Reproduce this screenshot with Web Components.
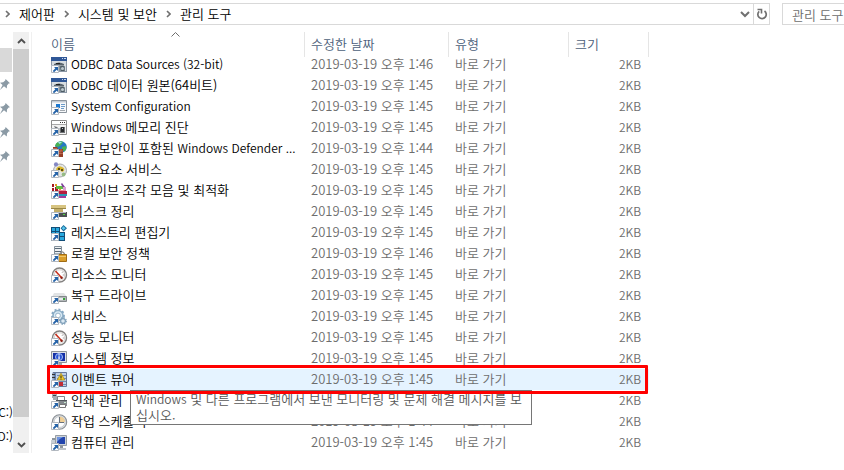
<!DOCTYPE html>
<html lang="ko">
<head>
<meta charset="utf-8">
<title>관리 도구</title>
<style>
    body {
        margin: 0;
        background: #fff;
        color: #000;
        font: 350 13px/21px "Noto Sans CJK KR", "Noto Sans", sans-serif;
        overflow: hidden;
    }
</style>
</head>
<body>
<explorer-window>
    <address-bar slot="address"></address-bar>
    <search-box slot="address" placeholder="관리 도구"></search-box>
    <nav-pane slot="nav"></nav-pane>
    <scroll-bar slot="nav"></scroll-bar>
    <file-list></file-list>
</explorer-window>

<script>
/**
 * Custom Element: Explorer Window
 */
class ExplorerWindow extends HTMLElement {
    connectedCallback() {
        this.attachShadow({ mode: 'open' }).innerHTML = `
            <style>
                :host { display: block; }
                header {
                    display: flex;
                    gap: 12px;
                    padding: 3px 0 7px;
                }
                main { display: flex; }
                .content {
                    flex: 1;
                    min-width: 0;
                    margin-left: 2px;
                    padding-left: 16px;
                    border-left: 1px solid #f0f0f0;
                }
            </style>
            <header><slot name="address"></slot></header>
            <main>
                <slot name="nav"></slot>
                <div class="content"><slot></slot></div>
            </main>
        `;
    }
}

/**
 * Custom Element: Address Bar
 */
class AddressBar extends HTMLElement {
    connectedCallback() {
        const chevron = `<svg width="5" height="8" viewBox="0 0 5 8"><path d="M1 1l3 3-3 3" fill="none" stroke="#707070" stroke-width="1.6"/></svg>`;
        const crumbs = ['제어판', '시스템 및 보안', '관리 도구'];

        this.attachShadow({ mode: 'open' }).innerHTML = `
            <style>
                :host {
                    flex: 1;
                    display: flex;
                    justify-content: space-between;
                    height: 20px;
                    border: 1px solid #d9d9d9;
                    border-left: 0;
                }
                nav, .tools { display: flex; }
                nav { padding-left: 5px; }
                .crumb {
                    display: flex;
                    align-items: center;
                    gap: 9px;
                    margin-right: 9px;
                }
                a {
                    color: #000;
                    line-height: 20px;
                    text-decoration: none;
                }
                button {
                    display: flex;
                    align-items: center;
                    justify-content: center;
                    width: 16px;
                    padding: 0;
                    border: 0;
                    background: none;
                }
                .refresh { border-left: 1px solid #d9d9d9; }
            </style>
            <nav aria-label="경로">
                ${crumbs.map(name => `<span class="crumb">${chevron}<a href="#">${name}</a></span>`).join('')}
            </nav>
            <div class="tools">
                <button aria-label="이전 위치">
                    <svg width="10" height="8" viewBox="0 0 10 8"><path d="M1 2l4 4 4-4" fill="none" stroke="#707070" stroke-width="2"/></svg>
                </button>
                <button class="refresh" aria-label="새로 고침">
                    <svg width="12" height="12" viewBox="0 0 12 12">
                        <path d="M8.5 3a4.2 4.2 0 1 1-5.3.3" fill="none" stroke="#707070" stroke-width="1.7"/>
                        <path d="M1.5 1.5h4v4" fill="none" stroke="#707070" stroke-width="1.6"/>
                    </svg>
                </button>
            </div>
        `;
    }
}

/**
 * Custom Element: Search Box
 */
class SearchBox extends HTMLElement {
    connectedCallback() {
        const placeholder = this.getAttribute('placeholder') ?? '';
        this.attachShadow({ mode: 'open' }).innerHTML = `
            <style>
                :host { display: flex; flex: 0 0 62px; }
                input {
                    width: 100%;
                    height: 22px;
                    box-sizing: border-box;
                    padding: 0 0 0 9px;
                    border: 1px solid #d9d9d9;
                    border-right: 0;
                    font: inherit;
                    line-height: 20px;
                    outline: none;
                }
                input::placeholder { color: #6d6d6d; }
            </style>
            <input type="text" aria-label="검색" placeholder="${placeholder}">
        `;
    }
}

/**
 * Custom Element: Navigation Pane (scrolled so that only its right edge shows)
 */
class NavPane extends HTMLElement {
    connectedCallback() {
        const pin = `
            <svg width="10" height="11" viewBox="0 0 10 11">
                <path d="M5.6 0L10 4.2 8.6 4.6 7 6.4 6.8 9.4 4 7.2 0 11 2.6 6 0 3.8 3.2 3.2 5.2 1.6z" fill="#8b9aa5"/>
            </svg>`;

        this.attachShadow({ mode: 'open' }).innerHTML = `
            <style>
                :host {
                    display: flex;
                    flex-direction: column;
                    flex: 0 0 13px;
                    overflow: hidden;
                    padding: 16px 0 6px;
                    box-sizing: border-box;
                }
                .item {
                    display: flex;
                    align-items: center;
                    justify-content: flex-end;
                    height: 24px;
                    padding-right: 3px;
                    white-space: nowrap;
                }
                .selected { margin-right: 1px; background: #d9d9d9; }
                .drive { padding-right: 0; font-size: 12px; }
                .drives { margin-top: auto; }
            </style>
            <div class="item selected"></div>
            ${`<div class="item">${pin}</div>`.repeat(4)}
            <div class="drives">
                <div class="item drive">C:)</div>
                <div class="item drive">D:)</div>
            </div>
        `;
    }
}

/**
 * Custom Element: Scroll Bar
 */
class ScrollBar extends HTMLElement {
    connectedCallback() {
        this.attachShadow({ mode: 'open' }).innerHTML = `
            <style>
                :host {
                    display: flex;
                    flex-direction: column;
                    flex: 0 0 16px;
                    background: #f0f0f0;
                }
                button {
                    display: flex;
                    align-items: center;
                    justify-content: center;
                    height: 17px;
                    padding: 0;
                    border: 0;
                    background: none;
                }
                .track { flex: 1; }
                .thumb { height: 95%; background: #cdcdcd; }
            </style>
            <button aria-label="위로">
                <svg width="9" height="8" viewBox="0 0 9 8"><path d="M1 6l3.5-3.5L8 6" fill="none" stroke="#505050" stroke-width="1.9"/></svg>
            </button>
            <div class="track"><div class="thumb"></div></div>
            <button aria-label="아래로">
                <svg width="9" height="8" viewBox="0 0 9 8"><path d="M1 2l3.5 3.5L8 2" fill="none" stroke="#505050" stroke-width="1.9"/></svg>
            </button>
        `;
    }
}

/**
 * Custom Element: Tool Icon, 16px picture with the shortcut badge in its corner
 */
const GAUGE = `
    <circle cx="8.5" cy="8" r="7" fill="#f4f4f4" stroke="#83817f" stroke-width="1.4"/>
    <circle cx="8.5" cy="8" r="5.2" fill="#fff" stroke="#c9c4c0" stroke-width=".7"/>
    <path d="M4.5 4l6.3 7" stroke="#c9301c" stroke-width="1.6"/>
    <path d="M12 4.6l-1 1.2M13.2 8h-1.4" stroke="#888" stroke-width=".8"/>
    <circle cx="10.6" cy="10.7" r="1.2" fill="#8a1d12"/>`;

const ODBC = `
    <path d="M0 0h16v15H0z" fill="#8c98a6"/>
    <path d="M0 0h16v4H0z" fill="#2f5797"/>
    <path d="M11 1h1v1h-1zM13 1h2v1h-2z" fill="#c9d8ee"/>
    <path d="M1 4h14v10H1z" fill="#d7dde1"/>
    <path d="M3 7q5-3 10 0v1.5H3z" fill="#59646d"/>
    <path d="M5 6h4v1H5z" fill="#222"/>
    <path d="M8 9h6v5H8z" fill="#89979f"/>
    <path d="M9 9.5q3-1.5 4.5.5v4H10z" fill="#4e5d66"/>
    <circle cx="11.5" cy="11.6" r="1.5" fill="#bfcbd1"/>`;

const ICONS = {
    odbc: ODBC,
    config: `
        <path d="M.5 1.5h15v12H.5z" fill="#f7f9fb" stroke="#8c959e"/>
        <path d="M1 2h14v1.5H1z" fill="#c4ccd4"/>
        <path d="M5 5h4v4H5z" fill="#1c78d0"/>
        <path d="M10 5h4v1h-4zM10 7h4v1h-4zM10 9h3v1h-3z" fill="#6c9bc9"/>
        <path d="M9 11h5v1H9z" fill="#a2a8ae"/>`,
    memory: `
        <path d="M.5.5h15v14H.5z" fill="#f2f2f2" stroke="#8c8c8c"/>
        <path d="M1 1h14v3H1z" fill="#fff"/>
        <path d="M9 2h1v1H9zM11 2h1v1h-1zM13 2h1v1h-1z" fill="#333"/>
        <path d="M1 4h14v1H1z" fill="#a8a8a8"/>
        <path d="M3 6l3 1 2 2 2-2h4v6H8V9L4 8z" fill="#6e7174"/>
        <path d="M10 7h3v5h-3z" fill="#292c2f"/>
        <path d="M8 8h1v5H8zM11 8h1v1h-1z" fill="#c0c4c8"/>`,
    firewall: `
        <circle cx="10" cy="6" r="5.8" fill="#2679c2"/>
        <path d="M7 1q3-1.5 5 0l-2 3-3 2-3-1q.5-3 3-4zM11 6l4-1q1 3-1.5 5.5L11 9z" fill="#48b252"/>
        <path d="M7 1.2q2-1 4 0L8.5 3z" fill="#a4def4"/>
        <path d="M2 6h4l1 2h5v8H7V9H2z" fill="#943d26"/>
        <path d="M2 7.5h4M8 10h4M8 12.5h4M10 8v2M9 10v2.5" stroke="#cf8266" stroke-width=".6"/>`,
    component: `
        <circle cx="9" cy="8.5" r="6.5" fill="#e4e5e3" stroke="#a7aaad"/>
        <circle cx="5" cy="2.4" r="2.1" fill="#8387c4"/>
        <path d="M5 7q2-4 6-2 3 1 2 4l-2 1-2-2-3 1z" fill="#d9b62c"/>
        <path d="M7 6h2v2H7zM10 7h2v2h-2z" fill="#5b4b12"/>
        <circle cx="12.6" cy="12.5" r="1.9" fill="#95bb84"/>`,
    defrag: `
        <path d="M1 1h2v3H1zM4 4h3v4H4zM1 5h2v3H1z" fill="#a51922"/>
        <path d="M4 1h2v2H4zM8 4h2v3H8z" fill="#e49a25"/>
        <path d="M5 3h7v3H5z" fill="#62bd43"/>
        <path d="M11 0l3 4-2 1-2-4z" fill="#7d3e99"/>
        <path d="M12 4h3v4h-3z" fill="#d9a0d4"/>
        <path d="M7 8h9v3H7z" fill="#b51d3f"/>
        <path d="M8 11h8v2H8z" fill="#2896b5"/>
        <path d="M7 13h8v2H7z" fill="#a13b9c"/>
        <path d="M7 7h8v1H7z" fill="#ef8b9b"/>`,
    cleanup: `
        <path d="M0 1h15v3H0z" fill="#d7c481"/>
        <path d="M0 4h15v1H0z" fill="#9a8746"/>
        <path d="M3 5h9v3H3z" fill="#c2ae69"/>
        <path d="M5 8h11v5H5z" fill="#4c5052"/>
        <path d="M6 8h9v1H6z" fill="#b8bbbd"/>
        <path d="M12 10h2v1h-2z" fill="#53d642"/>`,
    registry: `
        <path d="M0 2h9v5h5v9H0z" fill="#124e78"/>
        <path d="M1 3h3v3H1zM5 3h3v3H5zM5 7h3v3H5zM9 8h4v3H9zM9 12h4v3H9zM1 7h3v3H1z" fill="#29a9df"/>
        <path d="M12.5 0L16 3.2 12.5 6.5 9.5 3.2z" fill="#186b9b"/>
        <path d="M12.5 1.3l2 2-2 1.8-1.7-1.9z" fill="#5bc8ee"/>`,
    policy: `
        <path d="M3.5.5h7v13h-7z" fill="#eef1f3" stroke="#83909b"/>
        <path d="M4 2h6v1H4zM4 5h6v1H4z" fill="#596875"/>
        <path d="M4 7h6v1H4z" fill="#a2b0ba"/>
        <path d="M9.2 9V7.3q2-3 4 0V9" fill="none" stroke="#868686" stroke-width="1.3"/>
        <path d="M7.5 8.5h8v7h-8z" fill="#d99d2b" stroke="#a06c15"/>
        <path d="M8 10h7v1H8z" fill="#f0c76b"/>`,
    gauge: GAUGE,
    recovery: `
        <path d="M3 5h10l3 4H1z" fill="#e2e4e5"/>
        <path d="M1.5 8.5h14v5h-14z" fill="#b4b8ba" stroke="#83888b"/>
        <path d="M8 10h6v2H8z" fill="#e8ebec"/>
        <path d="M12 10h2v2h-2z" fill="#39a23a"/>`,
    services: `
        <circle cx="7" cy="6.5" r="5" fill="#d9e9f4" stroke="#8eafc7" stroke-width="1.6"/>
        <circle cx="7" cy="6.5" r="6" fill="none" stroke="#86a8c3" stroke-width="1.8" stroke-dasharray="2 2"/>
        <circle cx="7" cy="6.5" r="2.4" fill="#fff" stroke="#96b4ca"/>
        <circle cx="12" cy="12" r="2.4" fill="#dceaf4" stroke="#7e9fb9" stroke-width="1.2"/>
        <circle cx="12" cy="12" r="3.3" fill="none" stroke="#7e9fb9" stroke-width="1.2" stroke-dasharray="1.4 1.2"/>`,
    info: `
        <path d="M.5.5h15v11H.5z" fill="#dfe2e6" stroke="#8f949a"/>
        <path d="M2 2h12v8H2z" fill="#1530a6"/>
        <circle cx="8" cy="6" r="3.5" fill="#2a55d4" stroke="#a8c1f5"/>
        <path d="M7.4 3.2h1.3v1.2H7.4zM7.4 5.2h1.3v3.2H7.4z" fill="#fff"/>
        <path d="M6 12h5v2H6z" fill="#a0a5aa"/>
        <path d="M4 14h9v1H4z" fill="#777c82"/>`,
    event: `
        <path d="M2 .5h13.5v14H2z" fill="#bed0e7" stroke="#66799a"/>
        <path d="M3 1h2v13H3z" fill="#6381ad"/>
        <path d="M1 2h3v1H1zM1 5h3v1H1z" fill="#333"/>
        <path d="M6 3h9v1H6zM6 6h9v1H6zM6 9h9v1H6zM6 12h9v1H6z" fill="#6e8ab3"/>
        <path d="M10 1.2L13.8 8H6.2z" fill="#f5cd25" stroke="#a78b16" stroke-width=".7"/>
        <path d="M9.5 3.5h1v2.4h-1zM9.5 6.5h1v1h-1z" fill="#222"/>
        <path d="M8 10h4v4H8z" fill="#c12c35"/>`,
    print: `
        <path d="M1 1h5v2h5v4H2V5H1z" fill="#a7adb2"/>
        <path d="M2 2h3v1H2zM6 4h4v1H6z" fill="#42484d"/>
        <path d="M6.5 3.5h7v4h-7z" fill="#fff" stroke="#818589"/>
        <path d="M5 7h11v6H5z" fill="#84898d"/>
        <path d="M5 7h11v1H5z" fill="#50565b"/>
        <path d="M8.5 11.5h6v3h-6z" fill="#fff" stroke="#777"/>
        <path d="M13 9h2v1h-2z" fill="#c9ecd0"/>`,
    scheduler: `
        <circle cx="8.5" cy="8" r="7.2" fill="#d9dde1" stroke="#898e93" stroke-width="1.1"/>
        <circle cx="8.5" cy="8" r="5.4" fill="#fff" stroke="#bfc4c8" stroke-width=".8"/>
        <path d="M8.5 2.5a5.5 5.5 0 0 1 5.5 5.5H8.5z" fill="#f0cf95"/>
        <path d="M8.5 3v5.5H13" fill="none" stroke="#67717b" stroke-width="1.1"/>`,
    computer: `
        <path d="M0 5h4v6H0z" fill="#c9cfd4"/>
        <path d="M1 3h3v2H1z" fill="#8b959e"/>
        <path d="M4.5.5h11v10h-11z" fill="#ccd2d8" stroke="#959ca4"/>
        <path d="M6 2h8v7H6z" fill="#2345ad"/>
        <path d="M6 2h6q-4 2-6 5z" fill="#6c93df"/>
        <path d="M9 11h3v2H9z" fill="#8e969d"/>
        <path d="M8 13h7v2H8z" fill="#bfc5ca"/>`
};

class ToolIcon extends HTMLElement {
    connectedCallback() {
        this.attachShadow({ mode: 'open' }).innerHTML = `
            <style>
                :host { display: block; flex: 0 0 16px; height: 16px; }
                svg { display: block; overflow: visible; }
            </style>
            <svg width="16" height="16" viewBox="0 0 16 16" aria-hidden="true">
                ${ICONS[this.getAttribute('name')]}
                <path d="M.5 8.5h7v7h-7z" fill="#fff" stroke="#b3b9c0"/>
                <path d="M3 10h4v4L5.7 12.7 3 15.2 1.8 14 4.3 11.3z" fill="#2563a8"/>
            </svg>
        `;
    }
}

/**
 * Custom Element: Tool Tip
 */
class ToolTip extends HTMLElement {
    connectedCallback() {
        this.attachShadow({ mode: 'open' }).innerHTML = `
            <style>
                :host {
                    display: block;
                    width: 393px;
                    padding: 0 2px 1px 5px;
                    border: 1px solid #767676;
                    background: #fff;
                    color: #575757;
                    line-height: 16px;
                    white-space: normal;
                    word-break: break-all;
                }
            </style>
            <slot></slot>
        `;
    }
}

/**
 * Custom Element: File List (details view)
 */
class FileList extends HTMLElement {
    get items() {
        // name, icon, minute of the modified time
        return [
            ['ODBC Data Sources (32-bit)', 'odbc', 46],
            ['ODBC 데이터 원본(64비트)', 'odbc', 45],
            ['System Configuration', 'config', 45],
            ['Windows 메모리 진단', 'memory', 45],
            ['고급 보안이 포함된 Windows Defender ...', 'firewall', 44],
            ['구성 요소 서비스', 'component', 45],
            ['드라이브 조각 모음 및 최적화', 'defrag', 45],
            ['디스크 정리', 'cleanup', 45],
            ['레지스트리 편집기', 'registry', 45],
            ['로컬 보안 정책', 'policy', 46],
            ['리소스 모니터', 'gauge', 45],
            ['복구 드라이브', 'recovery', 45],
            ['서비스', 'services', 45],
            ['성능 모니터', 'gauge', 45],
            ['시스템 정보', 'info', 45],
            ['이벤트 뷰어', 'event', 45],
            ['인쇄 관리', 'print', 45],
            ['작업 스케줄러', 'scheduler', 44],
            ['컴퓨터 관리', 'computer', 45]
        ];
    }

    // Latin runs are set one size smaller than the Hangul beside them
    renderText(text) {
        return text.replace(/[A-Za-z][\x20-\x7e]*[A-Za-z.)]/g, run => `<span class="latin">${run}</span>`);
    }

    renderRow(item) {
        const [name, icon, minute] = item;
        const selected = name === '이벤트 뷰어';
        return `
            <tr class="${selected ? 'selected' : ''}">
                <td>
                    <div class="name"><tool-icon name="${icon}"></tool-icon><span>${this.renderText(name)}</span></div>
                    ${selected ? `
                        <tool-tip role="tooltip">${this.renderText('Windows 및 다른 프로그램에서 보낸 모니터링 및 문제 해결 메시지를 보십시오.')}</tool-tip>
                        <div class="marker"></div>` : ''}
                </td>
                <td>2019-03-19 오후 1:${minute}</td>
                <td>바로 가기</td>
                <td class="size">2KB</td>
            </tr>`;
    }

    renderStyle() {
        return `
            <style>
                :host { display: block; }
                table {
                    width: 601px;
                    table-layout: fixed;
                    border-collapse: collapse;
                }
                th, td {
                    height: 21px;
                    padding: 0;
                    text-align: left;
                    font-weight: inherit;
                    white-space: nowrap;
                }
                th { height: 22px; color: #4c607a; }
                th:first-child { position: relative; }
                .heading {
                    height: 25px;
                    margin-bottom: -3px;
                    padding-left: 6px;
                    border-right: 1px solid #e5e5e5;
                    line-height: 24px;
                }
                th:first-child .heading { padding-left: 3px; }
                .sort {
                    position: absolute;
                    top: 0;
                    left: calc(50% - 6px);
                }
                td {
                    padding-left: 6px;
                    color: #6d6d6d;
                    line-height: 19px;
                    vertical-align: top;
                }
                td:first-child { padding-left: 3px; color: #000; }
                td.size {
                    padding: 0 8px 0 0;
                    font-size: 12px;
                    text-align: right;
                }
                .name {
                    display: flex;
                    gap: 4px;
                    height: 21px;
                }
                .latin { font-size: 12px; }
                tool-icon { margin-top: 3px; }
                .selected { position: relative; background: #e5f3ff; }
                tool-tip {
                    position: absolute;
                    top: 21px;
                    left: 82px;
                }
                .marker {
                    position: absolute;
                    inset: -4px 1px -4px -1px;
                    border: 3px solid #f00;
                    border-radius: 1px;
                }
            </style>
        `;
    }

    connectedCallback() {
        this.attachShadow({ mode: 'open' }).innerHTML = `
            ${this.renderStyle()}
            <table>
                <colgroup>
                    <col style="width: 257px">
                    <col style="width: 144px">
                    <col style="width: 120px">
                    <col style="width: 80px">
                </colgroup>
                <thead>
                    <tr>
                        <th>
                            <div class="heading">이름</div>
                            <svg class="sort" width="9" height="5" viewBox="0 0 9 5"><path d="M.5 4.5l4-4 4 4" fill="none" stroke="#6d6d6d"/></svg>
                        </th>
                        <th><div class="heading">수정한 날짜</div></th>
                        <th><div class="heading">유형</div></th>
                        <th><div class="heading">크기</div></th>
                    </tr>
                </thead>
                <tbody>${this.items.map(item => this.renderRow(item)).join('')}</tbody>
            </table>
        `;
    }
}

// Register Elements
customElements.define('tool-icon', ToolIcon);
customElements.define('tool-tip', ToolTip);
customElements.define('file-list', FileList);
customElements.define('scroll-bar', ScrollBar);
customElements.define('nav-pane', NavPane);
customElements.define('search-box', SearchBox);
customElements.define('address-bar', AddressBar);
customElements.define('explorer-window', ExplorerWindow);
</script>
</body>
</html>
